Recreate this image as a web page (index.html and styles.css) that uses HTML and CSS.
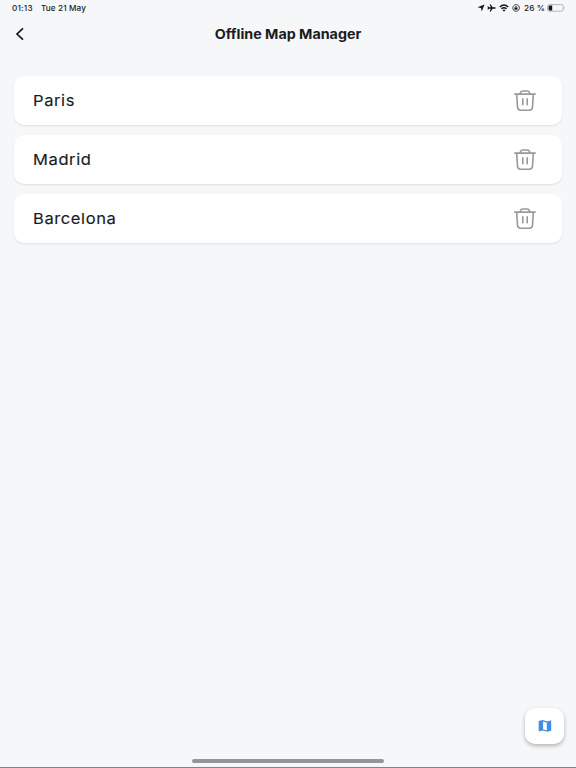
FILE: index.html
```
<!DOCTYPE html>
<html lang="en">

<head>
  <meta charset="UTF-8" />
  <meta name="viewport" content="width=device-width, initial-scale=1.0" />
  <title>Offline Map Manager</title>
  <link rel="stylesheet" href="styles.css">
</head>

<body>
  <!-- Shared icon -->
  <svg class="sprite" aria-hidden="true">
    <symbol id="trash" viewBox="0 .5 22 22">
      <path d="M.8 4.6h20.4M6 4.3l.5-1.2Q7.1 1.5 8.7 1.5h4.6q1.6 0 2.2 1.6l.5 1.2M2.7 4.8l.8 13q.2 2.9 3.1 2.9h8.8q2.9 0 3.1-2.9l.8-13M8.8 9.4v5.8M13.2 9.4v5.8" />
    </symbol>
  </svg>

  <div class="screen">
    <div class="status-bar">
      <span class="time">01:13</span>
      <span class="date">Tue 21 May</span>
      <div class="status-icons">
        <svg class="location" viewBox="0 0 8 8"><path d="M7.5.5 4.7 7.5 4 4 .5 3.3z" /></svg>
        <svg class="plane" viewBox="0 0 9 8"><path d="M8.8 4q0 .7-1.1.7H5.7L3.6 7.7h-.9l1-3H2L1.2 5.8H.5L.9 4 .5 2.2h.7L2 3.3h1.7l-1-3h.9l2.1 3h2q1.1 0 1.1.7z" /></svg>
        <svg class="wifi" viewBox="0 0 10 8"><path d="M.8 3q4.2-3.8 8.4 0M2.4 4.8q2.6-2.3 5.2 0" /><path class="dot" d="M3.5 6.1q1.5-1.2 3 0L5 7.7z" /></svg>
        <svg class="lock" viewBox="0 0 8 8"><path d="M6.5 1.7A3.3 3.3 0 1 1 4 .7q1.5 0 2.5 1M3.1 3.9v-.7q.9-1.4 1.8 0v.7" /><path class="dot" d="M2.5 3.7h3v2h-3z" /></svg>
        <span class="percent">26 %</span>
        <svg class="battery" viewBox="0 0 19 8"><rect x=".5" y=".6" width="15.7" height="6.6" rx="1.9" /><path class="level" d="M2.8 1.4h2.4v5H2.8q-1.2 0-1.2-1V2.4q0-1 1.2-1z" /><path class="cap" d="M17.2 2.8q1.5 1.1 0 2.3z" /></svg>
      </div>
    </div>

    <header class="header">
      <svg class="back" viewBox="0 0 10 14"><path d="M8 1.3 2 7l6 5.7" /></svg>
      <h1>Offline Map Manager</h1>
    </header>

    <!-- Downloaded maps -->
    <main class="map-list">
      <div class="map-card">
        <span>Paris</span>
        <svg class="trash"><use href="#trash" /></svg>
      </div>
      <div class="map-card">
        <span>Madrid</span>
        <svg class="trash"><use href="#trash" /></svg>
      </div>
      <div class="map-card">
        <span>Barcelona</span>
        <svg class="trash"><use href="#trash" /></svg>
      </div>
    </main>

    <button class="map-button" aria-label="Map">
      <svg viewBox="0 0 14 14"><path fill-rule="evenodd" d="M.7 2.1 4.6 1.1l4.7 1.3L13.2 1.3v10.4l-3.9 1.1-4.7-1.3L.7 12.6zM5.1 2.6v7.7l3.7 1.1V3.7z" /></svg>
    </button>
    <div class="home-indicator"></div>
  </div>
</body>

</html>
```

FILE: styles.css
```
* {
  box-sizing: border-box;
}

body {
  margin: 0;
  background: #f5f7f9;
  color: #1b1b1d;
  font-family: Inter, sans-serif;
}

.sprite {
  position: absolute;
  width: 0;
  height: 0;
}

.screen {
  display: flex;
  flex-direction: column;
  height: 100vh;
  overflow: hidden;
  border-bottom: 1px solid #6288b3;
}

.status-bar {
  display: flex;
  align-items: center;
  height: 16px;
  padding: 0 10px 0 12px;
  font-size: 7.5px;
  font-weight: 500;
  white-space: nowrap;
}

.status-bar span {
  transform: scaleX(1.09);
  transform-origin: left;
}

.time {
  width: 29px;
  letter-spacing: 0.2px;
}

.date {
  letter-spacing: 0.1px;
}

.status-icons {
  display: flex;
  align-items: center;
  margin-left: auto;
}

.status-icons svg {
  height: 8px;
  fill: #161618;
}

.location {
  width: 8px;
  margin-right: 2px;
}

.plane {
  width: 9px;
  margin-right: 3px;
}

.status-icons .wifi,
.status-icons .lock {
  fill: none;
  stroke: #161618;
}

.wifi {
  width: 10px;
  margin-right: 3px;
  stroke-width: 1.4;
}

.lock {
  width: 8px;
  margin-right: 4px;
  stroke-width: 0.8;
}

.status-icons .dot {
  fill: #161618;
  stroke: none;
}

.percent {
  width: 23px;
  letter-spacing: 0.1px;
}

.battery {
  width: 19px;
}

.battery rect {
  fill: none;
  stroke: #a1a3a5;
  stroke-width: 0.8;
}

.battery .cap {
  fill: #a1a3a5;
}

.header {
  display: grid;
  grid-template-columns: 40px 1fr 40px;
  align-items: center;
  height: 36px;
}

.back {
  width: 10px;
  height: 14px;
  margin-left: 15px;
  fill: none;
  stroke: #161618;
  stroke-width: 1.7;
}

h1 {
  margin: 0;
  text-align: center;
  font-size: 13.3px;
  font-weight: 650;
  line-height: 20px;
  transform: translateY(0.4px) scaleX(1.075);
}

.map-list {
  display: flex;
  flex-direction: column;
  gap: 10.2px;
  padding: 24px 14px 0;
}

.map-card {
  display: flex;
  align-items: center;
  justify-content: space-between;
  height: 49px;
  padding: 0 26px 0 19px;
  border-radius: 10px;
  background: #fff;
  box-shadow: 0 1px 2px rgba(0, 0, 0, 0.1);
  font-size: 15px;
  font-weight: 400;
  letter-spacing: 0.55px;
}

.map-card span {
  transform: translateY(0.4px) scaleX(1.1);
  transform-origin: left;
  -webkit-text-stroke: 0.15px #1b1b1d;
}

.trash {
  width: 22px;
  height: 22px;
  fill: none;
  stroke: #97999c;
  stroke-width: 1.6;
  stroke-linecap: round;
  stroke-linejoin: round;
}

.map-button {
  display: flex;
  align-items: center;
  justify-content: center;
  width: 39px;
  height: 36px;
  margin: auto 12px 15px auto;
  padding: 0;
  border: none;
  border-radius: 10px;
  background: #fff;
  box-shadow: 0 2px 4px rgba(0, 0, 0, 0.27);
}

.map-button svg {
  width: 14px;
  height: 14px;
  fill: #438ddf;
}

.home-indicator {
  width: 192px;
  height: 4px;
  margin: 0 auto 4px;
  border-radius: 2px;
  background: #929695;
}
```
